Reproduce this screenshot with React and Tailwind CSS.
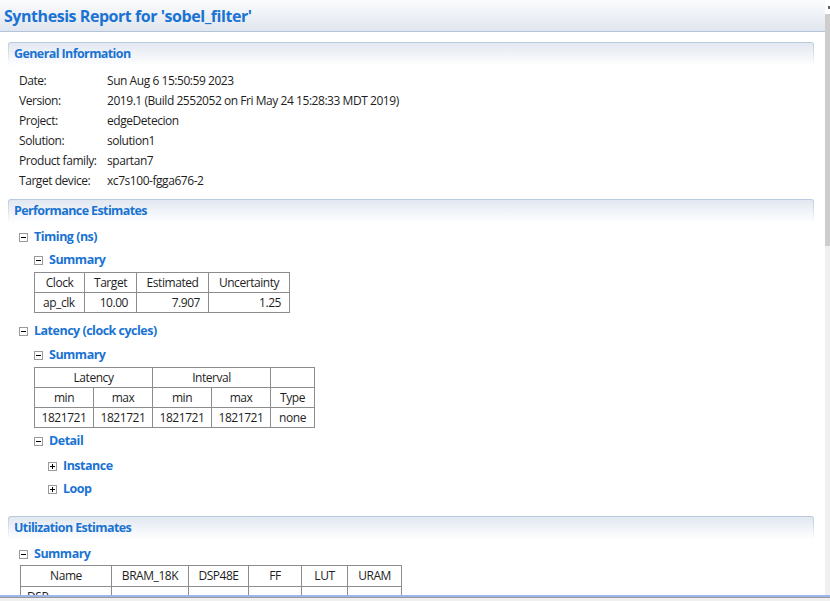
import { Fragment } from "react";

const FONT = "font-['Segoe_UI','Open_Sans','Noto_Sans',sans-serif]";

function Toggle({ open = true }) {
  return (
    <span className="relative mr-[6px] inline-block h-[9px] w-[9px] shrink-0 border border-[#9a9a9a] bg-white">
      <span className="absolute left-[1px] top-[3px] h-px w-[5px] bg-black" />
      {!open && <span className="absolute left-[3px] top-[1px] h-[5px] w-px bg-black" />}
    </span>
  );
}

function Heading({ children, open = true, className = "" }) {
  return (
    <div className={`flex h-[20px] items-center text-[12.5px] font-bold tracking-[-0.5px] text-[#1a73d2] ${className}`}>
      <Toggle open={open} />
      <span>{children}</span>
    </div>
  );
}

function SectionBar({ title, className = "" }) {
  return (
    <div className={`mr-[11px] ml-[8px] rounded-t-[3px] bg-gradient-to-b from-[#b8c9dd] to-white px-px pt-px ${className}`}>
      <div className="flex h-[23px] items-center rounded-t-[2px] bg-gradient-to-b from-[#e2e8f1] to-white pl-[5px] text-[12.5px] font-bold tracking-[-0.6px] text-[#1a73d2]">
        {title}
      </div>
    </div>
  );
}

const info = [
  ["Date:", "Sun Aug 6 15:50:59 2023"],
  ["Version:", "2019.1 (Build 2552052 on Fri May 24 15:28:33 MDT 2019)"],
  ["Project:", "edgeDetecion"],
  ["Solution:", "solution1"],
  ["Product family:", "spartan7"],
  ["Target device:", "xc7s100-fgga676-2"],
];

const cell = "h-[20px] border border-[#8c8c8c] p-0 leading-[18px]";

export default function App() {
  return (
    <div className={`flex h-[601px] w-[830px] flex-col overflow-hidden bg-white text-[12px] tracking-[-0.45px] text-[#1e1e1e] ${FONT}`}>
      <div className="flex min-h-0 flex-1">
        <div className="min-w-0 flex-1 overflow-hidden">
          <div className="flex h-[32px] items-center border-b border-[#b4c4d8] bg-gradient-to-b from-[#fbfcfd] to-[#e0e6ef] pl-[4px] text-[16px] font-bold tracking-[-0.45px] text-[#1a73d2]">
            Synthesis Report for 'sobel_filter'
          </div>

          <SectionBar title="General Information" className="mt-[10px]" />
          <div className="pt-[5px] pl-[19px]">
            {info.map(([k, v]) => (
              <div key={k} className="flex h-[20px] items-center">
                <span className="w-[88px] shrink-0">{k}</span>
                <span>{v}</span>
              </div>
            ))}
          </div>

          <SectionBar title="Performance Estimates" className="mt-[8px]" />
          <div className="pl-[19px]">
            <Heading className="mt-[4px]">Timing (ns)</Heading>
            <div className="pl-[15px]">
              <Heading className="mt-[3px]">Summary</Heading>
              <table className="mt-[2px] border-collapse">
                <tbody>
                  <tr>
                    <td className={`${cell} w-[50px] text-center`}>Clock</td>
                    <td className={`${cell} w-[52px] text-center`}>Target</td>
                    <td className={`${cell} w-[72px] text-center`}>Estimated</td>
                    <td className={`${cell} w-[81px] text-center`}>Uncertainty</td>
                  </tr>
                  <tr>
                    <td className={`${cell} pl-[8px] text-left`}>ap_clk</td>
                    <td className={`${cell} pr-[8px] text-right`}>10.00</td>
                    <td className={`${cell} pr-[8px] text-right`}>7.907</td>
                    <td className={`${cell} pr-[8px] text-right`}>1.25</td>
                  </tr>
                </tbody>
              </table>
            </div>

            <Heading className="mt-[8px]">Latency (clock cycles)</Heading>
            <div className="pl-[15px]">
              <Heading className="mt-[4px]">Summary</Heading>
              <table className="mt-[2px] border-collapse text-center">
                <tbody>
                  <tr>
                    <td colSpan={2} className={cell}>Latency</td>
                    <td colSpan={2} className={cell}>Interval</td>
                    <td className={cell} />
                  </tr>
                  <tr>
                    <td className={`${cell} w-[59px]`}>min</td>
                    <td className={`${cell} w-[59px]`}>max</td>
                    <td className={`${cell} w-[59px]`}>min</td>
                    <td className={`${cell} w-[59px]`}>max</td>
                    <td className={`${cell} w-[44px]`}>Type</td>
                  </tr>
                  <tr>
                    {["1821721", "1821721", "1821721", "1821721", "none"].map((v, i) => (
                      <td key={i} className={cell}>{v}</td>
                    ))}
                  </tr>
                </tbody>
              </table>
              <Heading className="mt-[3px]">Detail</Heading>
              <div className="pl-[14px]">
                <Heading open={false} className="mt-[5px]">Instance</Heading>
                <Heading open={false} className="mt-[3px]">Loop</Heading>
              </div>
            </div>
          </div>

          <SectionBar title="Utilization Estimates" className="mt-[17px]" />
          <div className="pl-[19px]">
            <Heading className="mt-[4px]">Summary</Heading>
            <table className="mt-px ml-px border-collapse text-center">
              <tbody>
                <tr>
                  {[
                    ["Name", "w-[91px]"],
                    ["BRAM_18K", "w-[77px]"],
                    ["DSP48E", "w-[60px]"],
                    ["FF", "w-[53px]"],
                    ["LUT", "w-[46px]"],
                    ["URAM", "w-[54px]"],
                  ].map(([t, w]) => (
                    <td key={t} className={`${cell} h-[21px] ${w}`}>{t}</td>
                  ))}
                </tr>
                <tr>
                  <td className={`${cell} pl-[6px] text-left`}>DSP</td>
                  {[0, 1, 2, 3, 4].map((i) => (
                    <td key={i} className={cell} />
                  ))}
                </tr>
              </tbody>
            </table>
          </div>
        </div>

        <div className="flex w-[5px] shrink-0 flex-col bg-[#f0f0f0]">
          <div className="relative h-[14px] bg-white">
            <span className="absolute right-0 top-[6px] h-[3px] w-[2px] bg-[#606060]" />
          </div>
          <div className="h-[232px] bg-[#cdcdcd]" />
        </div>
      </div>

      <div className="h-[2px] bg-[#9cb6e9]" />
      <div className="h-px bg-[#9a9a9a]" />
      <div className="h-[3px] bg-[#f0f0f0]" />
    </div>
  );
}
